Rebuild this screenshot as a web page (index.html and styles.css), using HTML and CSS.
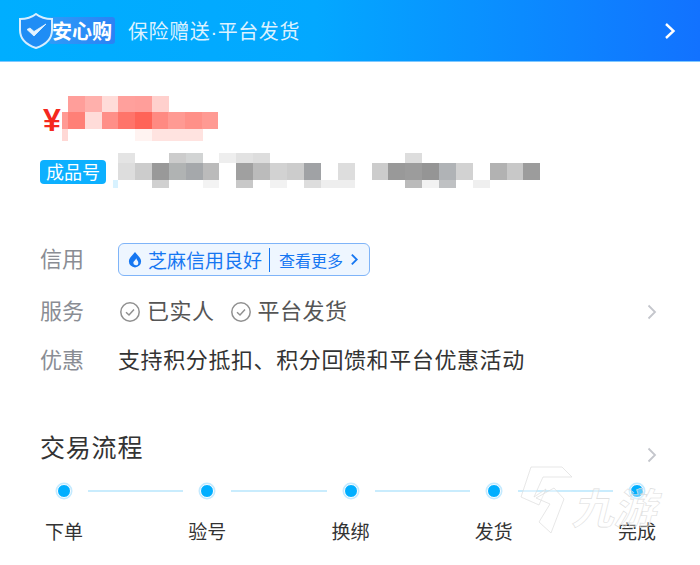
FILE: index.html
```html
<!DOCTYPE html>
<html lang="zh-CN">

<head>
    <meta charset="UTF-8">
    <title>安心购</title>
    <link rel="stylesheet" href="styles.css">
</head>

<body>
    <main class="page">
        <header class="banner">
            <div class="logo">
                <svg class="shield" viewBox="0 0 34 36" width="34" height="36">
                    <path d="M17 1 C22 5 27 6 33 6 L33 17 C33 26 26 32 17 35 C8 32 1 26 1 17 L1 6 C7 6 12 5 17 1 Z" fill="#1f8df5" stroke="#d6eeff" stroke-width="2" />
                    <path d="M8 16.5 L15 23 L27 11 L15 18.5 L11 15 Z" fill="#e4f4ff" stroke="#e4f4ff" stroke-width=".8" stroke-linejoin="round" />
                </svg>
                <span class="logo-text">安心购</span>
            </div>
            <span class="banner-text">保险赠送<span class="banner-dot">·</span>平台发货</span>
            <svg class="banner-arrow" viewBox="0 0 12 18" width="12" height="18">
                <path d="M2 2 L9.5 9 L2 16" fill="none" stroke="#fff" stroke-width="2.4" />
            </svg>
        </header>

        <section class="summary">
            <div class="price">
                <span class="yen">¥</span>
                <svg class="mosaic" viewBox="62 96 157 45" width="157" height="45">
                    <rect x="68" y="96" width="17" height="16" fill="#ff9e9a" />
                    <rect x="85" y="96" width="17" height="16" fill="#ffb0ac" />
                    <rect x="102" y="96" width="17" height="16" fill="#ffdcd9" />
                    <rect x="118" y="96" width="17" height="16" fill="#ffa09c" />
                    <rect x="135" y="96" width="17" height="16" fill="#ff9e9a" />
                    <rect x="152" y="96" width="17" height="16" fill="#ffd0cd" />
                    <rect x="62" y="112" width="6" height="17" fill="#ff9a94" />
                    <rect x="68" y="112" width="17" height="17" fill="#ff8077" />
                    <rect x="85" y="112" width="17" height="17" fill="#ffdcd9" />
                    <rect x="102" y="112" width="17" height="17" fill="#ff8f88" />
                    <rect x="118" y="112" width="17" height="17" fill="#ff746a" />
                    <rect x="135" y="112" width="17" height="17" fill="#ff6458" />
                    <rect x="152" y="112" width="17" height="17" fill="#ff8a82" />
                    <rect x="168" y="112" width="17" height="17" fill="#ff9a93" />
                    <rect x="185" y="112" width="17" height="17" fill="#ff9088" />
                    <rect x="202" y="112" width="16" height="17" fill="#ff9a93" />
                    <rect x="62" y="129" width="6" height="12" fill="#ffd8d5" />
                    <rect x="135" y="129" width="17" height="12" fill="#fff3f1" />
                    <rect x="152" y="129" width="51" height="12" fill="#ffe3e0" />
                </svg>
            </div>
            <div class="serial">
                <span class="serial-tag">成品号</span>
                <svg class="mosaic" viewBox="113 153 428 35" width="428" height="35">
                    <rect x="118" y="153" width="17" height="10" fill="#e4e4e4" />
                    <rect x="169" y="153" width="17" height="10" fill="#cccccc" />
                    <rect x="186" y="153" width="17" height="10" fill="#d2d4d4" />
                    <rect x="219" y="153" width="17" height="10" fill="#eeeeee" />
                    <rect x="236" y="153" width="17" height="10" fill="#e2e2e2" />
                    <rect x="253" y="153" width="17" height="10" fill="#dddddd" />
                    <rect x="405" y="153" width="17" height="10" fill="#dddddd" />
                    <rect x="118" y="163" width="17" height="17" fill="#dddddd" />
                    <rect x="135" y="163" width="17" height="17" fill="#cccccc" />
                    <rect x="152" y="163" width="17" height="17" fill="#999999" />
                    <rect x="169" y="163" width="17" height="17" fill="#b0b3b3" />
                    <rect x="186" y="163" width="17" height="17" fill="#a5a8ab" />
                    <rect x="203" y="163" width="16" height="17" fill="#bbbbbb" />
                    <rect x="236" y="163" width="17" height="17" fill="#a0a0a0" />
                    <rect x="253" y="163" width="17" height="17" fill="#bbbbbb" />
                    <rect x="270" y="163" width="17" height="17" fill="#d2d2d2" />
                    <rect x="287" y="163" width="17" height="17" fill="#cccccc" />
                    <rect x="304" y="163" width="17" height="17" fill="#a0a2a5" />
                    <rect x="338" y="163" width="17" height="17" fill="#dddddd" />
                    <rect x="372" y="163" width="17" height="17" fill="#cccccc" />
                    <rect x="388" y="163" width="17" height="17" fill="#999999" />
                    <rect x="405" y="163" width="17" height="17" fill="#9c9c9c" />
                    <rect x="422" y="163" width="17" height="17" fill="#959595" />
                    <rect x="439" y="163" width="17" height="17" fill="#b0b3b6" />
                    <rect x="456" y="163" width="17" height="17" fill="#d2d2d2" />
                    <rect x="490" y="163" width="17" height="17" fill="#b2b2b2" />
                    <rect x="507" y="163" width="17" height="17" fill="#c8c8c8" />
                    <rect x="523" y="163" width="17" height="17" fill="#9c9c9c" />
                    <rect x="113" y="180" width="5" height="8" fill="#d8f2ff" />
                    <rect x="152" y="180" width="17" height="8" fill="#d0d0d0" />
                    <rect x="203" y="180" width="16" height="8" fill="#f3f3f3" />
                    <rect x="236" y="180" width="17" height="8" fill="#c8c8c8" />
                    <rect x="270" y="180" width="17" height="8" fill="#f2f2f2" />
                    <rect x="304" y="180" width="17" height="8" fill="#dddddd" />
                    <rect x="321" y="180" width="34" height="8" fill="#eeeeee" />
                    <rect x="405" y="180" width="17" height="8" fill="#bbbbbb" />
                    <rect x="422" y="180" width="17" height="8" fill="#f2f2f2" />
                    <rect x="439" y="180" width="17" height="8" fill="#bfc1c3" />
                    <rect x="473" y="180" width="17" height="8" fill="#efefef" />
                </svg>
            </div>
        </section>

        <section class="info">
            <div class="info-row info-row-first">
                <span class="info-label">信用</span>
                <div class="credit">
                    <svg class="credit-icon" viewBox="0 0 16 18" width="14" height="17">
                        <path d="M8 .5 C10.5 4 15 7 15 11 A7 7 0 0 1 1 11 C1 7 5.5 4 8 .5 Z" fill="#1677f2" />
                        <path d="M9.5 7.5 C9.8 9.5 11.8 10.8 11.8 12.6 A2.9 2.9 0 0 1 6 12.8 C6 10.8 8.8 9.8 9.5 7.5 Z" fill="#eef6ff" />
                    </svg>
                    <span class="credit-name">芝麻信用良好</span>
                    <span class="credit-more">查看更多</span>
                    <svg viewBox="0 0 10 14" width="9" height="13">
                        <path d="M2 1.5 L7.5 7 L2 12.5" fill="none" stroke="#1677f2" stroke-width="2" />
                    </svg>
                </div>
            </div>
            <div class="info-row">
                <span class="info-label">服务</span>
                <div class="service">
                    <svg viewBox="0 0 20 20" width="20" height="20">
                        <circle cx="10" cy="10" r="9.2" fill="none" stroke="#909090" stroke-width="1.5" />
                        <path d="M6 10.3 L9 13 L14 7.5" fill="none" stroke="#909090" stroke-width="1.5" />
                    </svg>
                    <span>已实人</span>
                </div>
                <div class="service">
                    <svg viewBox="0 0 20 20" width="20" height="20">
                        <circle cx="10" cy="10" r="9.2" fill="none" stroke="#909090" stroke-width="1.5" />
                        <path d="M6 10.3 L9 13 L14 7.5" fill="none" stroke="#909090" stroke-width="1.5" />
                    </svg>
                    <span>平台发货</span>
                </div>
                <svg class="more" viewBox="0 0 10 16" width="10" height="16">
                    <path d="M1.5 1.5 L8 8 L1.5 14.5" fill="none" stroke="#c4c6cc" stroke-width="1.8" />
                </svg>
            </div>
            <div class="info-row info-row-last">
                <span class="info-label">优惠</span>
                <span class="discount">支持积分抵扣、积分回馈和平台优惠活动</span>
            </div>
        </section>

        <section class="flow">
            <div class="flow-head">
                <h2>交易流程</h2>
                <svg class="more" viewBox="0 0 10 16" width="10" height="16">
                    <path d="M1.5 1.5 L8 8 L1.5 14.5" fill="none" stroke="#c4c6cc" stroke-width="1.8" />
                </svg>
            </div>
            <div class="steps">
                <div class="step"><i class="dot"></i><span>下单</span></div>
                <i class="line"></i>
                <div class="step"><i class="dot"></i><span>验号</span></div>
                <i class="line"></i>
                <div class="step"><i class="dot"></i><span>换绑</span></div>
                <i class="line"></i>
                <div class="step"><i class="dot"></i><span>发货</span></div>
                <i class="line"></i>
                <div class="step"><i class="dot"></i><span>完成</span></div>
            </div>
        </section>

        <!-- watermark -->
        <div class="watermark">
            <svg viewBox="0 0 60 70" width="60" height="70">
                <path d="M11 1 L1 31 L19 39 L26 23 L14 31 L23 11 L52 11 L42 1 Z" fill="rgba(255,255,255,.35)" stroke="#dcdcdc" stroke-width=".7" />
                <path d="M16 32 L34 22 L44 33 L31 67 L19 56 L30 38 Z" fill="rgba(255,255,255,.35)" stroke="#dcdcdc" stroke-width=".7" />
            </svg>
            <span class="watermark-text">九游</span>
        </div>
    </main>
</body>

</html>
```

FILE: styles.css
```css
* {
    box-sizing: border-box;
}

body {
    margin: 0;
    background: #fff;
    font-family: "Noto Sans CJK SC", "Noto Sans", sans-serif;
}

.page {
    position: relative;
    width: 700px;
    height: 565px;
    overflow: hidden;
}

/* top banner */
.banner {
    display: flex;
    align-items: center;
    height: 62px;
    padding: 0 24px 0 19px;
    background: linear-gradient(90deg, #00aeff 0%, #03a8ff 45%, #1272ff 100%);
    border-bottom: 1px solid #7fc8ff;
}

.logo {
    position: relative;
    display: flex;
    align-items: center;
    height: 36px;
}

.shield {
    position: relative;
    z-index: 1;
}

.logo-text {
    width: 66px;
    height: 27px;
    margin-left: -4px;
    padding-left: 3px;
    background: linear-gradient(90deg, #2f9bf8, #2a82f5);
    border-radius: 3px;
    color: #fff;
    font-size: 20px;
    font-weight: 700;
    line-height: 27px;
}

.banner-text {
    margin-left: 13px;
    color: #dcf2ff;
    font-size: 20px;
    letter-spacing: .6px;
}

.banner-dot {
    font-family: "Liberation Sans", sans-serif;
}

.banner-arrow {
    margin-left: auto;
}

/* price and serial */
.summary {
    padding: 34px 0 0 40px;
}

.price {
    display: flex;
    align-items: flex-start;
}

.yen {
    width: 19px;
    margin: 7px 0 0 3px;
    color: #f5281e;
    font-family: "Liberation Sans", sans-serif;
    font-size: 32px;
    font-weight: 700;
    line-height: 34px;
}

.mosaic {
    display: block;
    flex: none;
}

.serial {
    display: flex;
    align-items: flex-start;
    margin-top: 12px;
}

.serial-tag {
    width: 66px;
    height: 24px;
    margin: 7px 7px 0 0;
    background: #0cb0ff;
    border-radius: 4px;
    color: #fff;
    font-size: 18px;
    line-height: 23px;
    text-align: center;
}

/* info rows */
.info {
    display: flex;
    flex-direction: column;
    gap: 17px;
    margin-top: 55px;
    padding: 0 43px 0 40px;
}

.info-row {
    display: flex;
    align-items: center;
    height: 33px;
}

.info-row-first {
    margin-bottom: 2px;
}

.info-row-last {
    margin: -1px 0 1px;
}

.info-label {
    width: 78px;
    margin-bottom: 6px;
    color: #8a8d94;
    font-size: 22px;
}

.credit {
    display: flex;
    align-items: center;
    width: 252px;
    height: 33px;
    padding-left: 9px;
    background: #eef6ff;
    border: 1px solid #7fb4f8;
    border-radius: 6px;
    color: #1677f2;
}

.credit-name {
    margin-left: 6px;
    padding-right: 7px;
    border-right: 1px solid #1677f2;
    font-size: 19px;
    line-height: 24px;
}

.credit-more {
    margin: 0 7px 0 9px;
    font-size: 16px;
}

.service {
    display: flex;
    align-items: center;
    gap: 7px;
    margin: 0 14px 0 2px;
    color: #555;
    font-size: 22px;
    letter-spacing: .5px;
}

.service span {
    margin-bottom: 6px;
}

.more {
    flex: none;
    margin-left: auto;
}

.discount {
    margin-bottom: 6px;
    color: #333;
    font-size: 22px;
    letter-spacing: .6px;
}

/* trade flow */
.flow {
    margin-top: 54px;
    padding: 0 43px 0 40px;
}

.flow-head {
    display: flex;
    align-items: center;
    height: 36px;
}

.flow-head h2 {
    margin: 0 0 8px;
    color: #333;
    font-size: 25px;
    font-weight: 400;
    letter-spacing: .8px;
}

.flow-head .more {
    margin-top: 10px;
}

.steps {
    display: flex;
    align-items: flex-start;
    margin: 16px 0 0 4px;
}

.step {
    display: flex;
    flex: none;
    flex-direction: column;
    align-items: center;
    width: 40px;
    color: #333;
    font-size: 19px;
}

.step span {
    margin-top: 19px;
    line-height: 28px;
    white-space: nowrap;
}

.dot {
    width: 14px;
    height: 14px;
    background: #00aeff;
    border: 1.5px solid #fff;
    border-radius: 50%;
    box-shadow: 0 0 0 1.5px #c4eaff;
}

.line {
    flex: 1;
    height: 2px;
    margin: 6px 4px 0;
    background: #c9ecfd;
}

/* watermark lies over the last step */
.watermark {
    position: absolute;
    top: 466px;
    left: 520px;
    display: flex;
    align-items: flex-end;
}

.watermark-text {
    margin: 0 0 5px -4px;
    color: rgba(255, 255, 255, .35);
    font-size: 42px;
    font-weight: 700;
    line-height: 50px;
    transform: skewX(-14deg);
    -webkit-text-stroke: .6px #dcdcdc;
}
```
